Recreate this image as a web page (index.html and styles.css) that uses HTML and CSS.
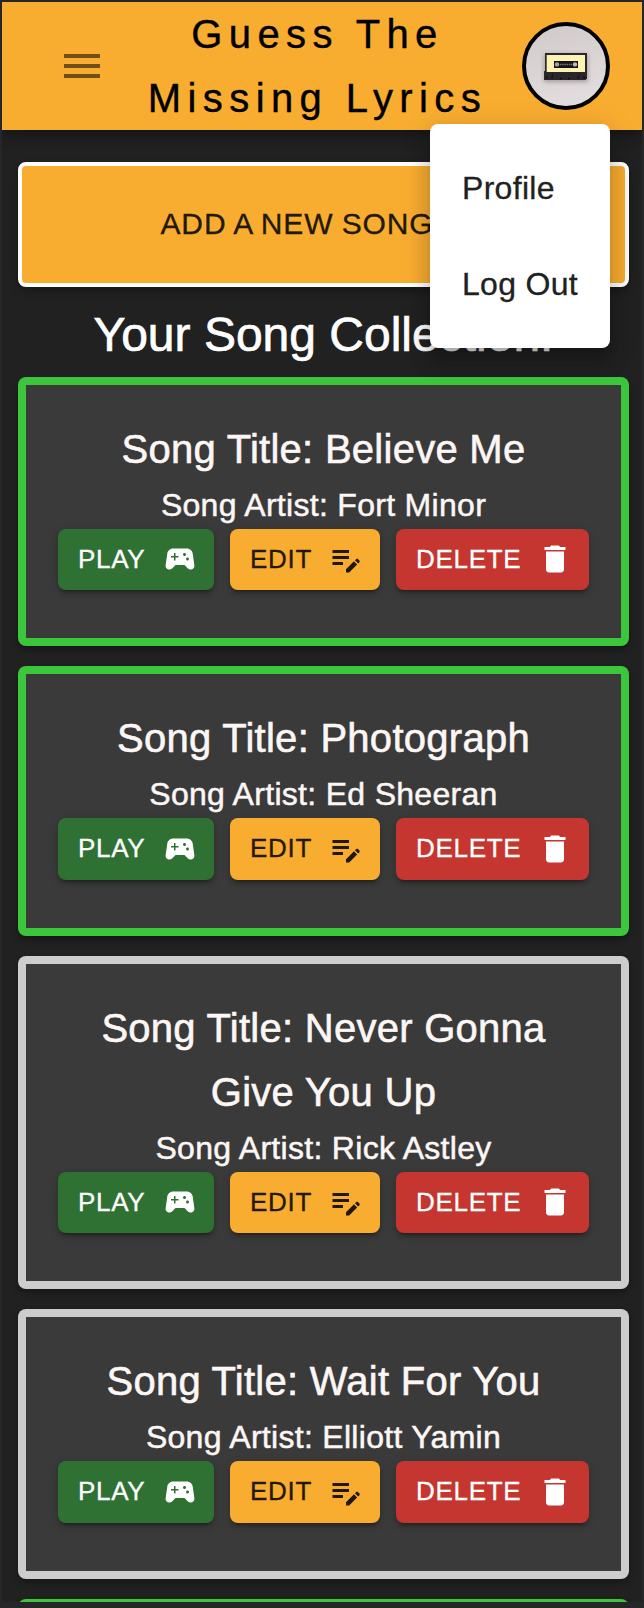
FILE: index.html
```html
<!DOCTYPE html>
<html lang="en">
<head>
<meta charset="utf-8">
<title>Guess The Missing Lyrics</title>
<link rel="stylesheet" href="styles.css">
</head>
<body>
<svg class="sprite" aria-hidden="true">
  <symbol id="game" viewBox="0 0 24 24"><path d="m21.58 16.09-1.09-7.66C20.21 6.46 18.52 5 16.53 5H7.47C5.48 5 3.79 6.46 3.51 8.43l-1.09 7.66C2.2 17.63 3.39 19 4.94 19c.68 0 1.32-.27 1.8-.75L9 16h6l2.25 2.25c.48.48 1.13.75 1.8.75 1.56 0 2.75-1.37 2.53-2.91M11 11H9v2H8v-2H6v-1h2V8h1v2h2zm4-1c-.55 0-1-.45-1-1s.45-1 1-1 1 .45 1 1-.45 1-1 1m2 3c-.55 0-1-.45-1-1s.45-1 1-1 1 .45 1 1-.45 1-1 1"/></symbol>
  <symbol id="note" viewBox="0 0 24 24"><path d="M3 10h11v2H3v-2zm0-2h11V6H3v2zm0 8h7v-2H3v2zm15.01-3.13.71-.71c.39-.39 1.02-.39 1.41 0l.71.71c.39.39.39 1.02 0 1.41l-.71.71-2.12-2.12zm-.71.71-5.3 5.3V21h2.12l5.3-5.3-2.12-2.12z"/></symbol>
  <symbol id="trash" viewBox="0 0 24 24"><path d="M6 19c0 1.1.9 2 2 2h8c1.1 0 2-.9 2-2V7H6v12zM19 4h-3.5l-1-1h-5l-1 1H5v2h14V4z"/></symbol>
</svg>
<div class="app">
  <header class="bar">
    <svg class="burger" viewBox="0 0 24 24"><path d="M3 18h18v-2H3v2zm0-5h18v-2H3v2zm0-7v2h18V6H3z"/></svg>
    <h1 class="brand">Guess The<br>Missing Lyrics</h1>
    <div class="account">
      <svg class="avatar" viewBox="0 0 88 88">
        <defs>
          <linearGradient id="wall" x1="0" y1="0" x2="0.3" y2="1"><stop offset="0" stop-color="#cfc9c8"/><stop offset="1" stop-color="#e2dcde"/></linearGradient>
          <filter id="soft" x="-30%" y="-30%" width="160%" height="160%"><feGaussianBlur stdDeviation="2.2"/></filter>
        </defs>
        <circle cx="44" cy="44" r="42" fill="url(#wall)" stroke="#000" stroke-width="4"/>
        <rect x="22" y="32" width="44" height="28" fill="#8d8688" opacity=".7" filter="url(#soft)"/>
        <path d="M23 31h42v26h-1v1H22v-9h1z" fill="#29272a"/>
        <rect x="24.7" y="33" width="38.3" height="17" fill="#fbf2b4"/>
        <rect x="32" y="39" width="24" height="7" fill="#171417"/>
        <circle cx="35" cy="42.4" r="2.2" fill="#a8a4a5"/><circle cx="53" cy="42.4" r="2.2" fill="#bdb8b9"/>
        <path d="M38 42.5h12" stroke="#787476" stroke-width="1.6" stroke-dasharray="1.5 .7"/>
        <path d="M24 55.5h2m3 0h2m7 1h2m6 0h2m7-1h2m4 0h2M30 53h1m26 0h1" stroke="#0e0d0f" stroke-width="1.6"/>
      </svg>
      <nav class="menu"><a class="item">Profile</a><a class="item">Log Out</a></nav>
    </div>
  </header>
  <main class="content">
    <button class="add">Add a new song</button>
    <h2 class="heading">Your Song Collection!</h2>
    <section class="songs">
      <article class="card done">
        <h3 class="title">Song Title: Believe Me</h3><p class="artist">Song Artist: Fort Minor</p>
        <div class="actions"><button class="btn play">Play<svg class="icon"><use href="#game"/></svg></button><button class="btn edit">Edit<svg class="icon"><use href="#note"/></svg></button><button class="btn delete">Delete<svg class="icon"><use href="#trash"/></svg></button></div>
      </article>
      <article class="card done">
        <h3 class="title">Song Title: Photograph</h3><p class="artist">Song Artist: Ed Sheeran</p>
        <div class="actions"><button class="btn play">Play<svg class="icon"><use href="#game"/></svg></button><button class="btn edit">Edit<svg class="icon"><use href="#note"/></svg></button><button class="btn delete">Delete<svg class="icon"><use href="#trash"/></svg></button></div>
      </article>
      <article class="card">
        <h3 class="title">Song Title: Never Gonna<br>Give You Up</h3><p class="artist">Song Artist: Rick Astley</p>
        <div class="actions"><button class="btn play">Play<svg class="icon"><use href="#game"/></svg></button><button class="btn edit">Edit<svg class="icon"><use href="#note"/></svg></button><button class="btn delete">Delete<svg class="icon"><use href="#trash"/></svg></button></div>
      </article>
      <article class="card">
        <h3 class="title">Song Title: Wait For You</h3><p class="artist">Song Artist: Elliott Yamin</p>
        <div class="actions"><button class="btn play">Play<svg class="icon"><use href="#game"/></svg></button><button class="btn edit">Edit<svg class="icon"><use href="#note"/></svg></button><button class="btn delete">Delete<svg class="icon"><use href="#trash"/></svg></button></div>
      </article>
      <article class="card done"></article>
    </section>
  </main>
</div>
</body>
</html>
```
FILE: styles.css
```css
* { box-sizing: border-box; }
html { height: 1608px; overflow: hidden; background: #262527; }
body { margin: 0; padding: 2px 2px 6px 2px; height: 1608px; overflow: hidden; font-family: "Liberation Sans", Arial, sans-serif; }
h1, h2, h3, p { margin: 0; font-weight: 400; }
.sprite { display: none; }
.app { width: 640px; height: 1600px; overflow: hidden; background: #212121; }

.bar { position: relative; z-index: 2; height: 128px; padding: 0 32px 0 56px; display: flex; align-items: center; justify-content: space-between; background: #f9ad30; box-shadow: 0 4px 8px -2px rgba(0,0,0,.2), 0 8px 10px rgba(0,0,0,.14), 0 2px 20px rgba(0,0,0,.12); }
.burger { width: 48px; height: 48px; fill: rgba(0,0,0,.54); }
.brand { margin-left: 7px; color: #000; font-size: 40px; line-height: 64px; letter-spacing: 6.4px; text-align: center; -webkit-text-stroke: .4px #000; }
.account { position: relative; width: 88px; height: 88px; }
.avatar { display: block; width: 88px; height: 88px; }
.menu { position: absolute; top: 102px; right: 0; width: 180px; padding: 16px 0; border-radius: 8px; background: #fff; box-shadow: 0 10px 10px -6px rgba(0,0,0,.2), 0 16px 20px 2px rgba(0,0,0,.14), 0 6px 28px 4px rgba(0,0,0,.12); }
.item { display: block; height: 96px; padding: 0 32px; line-height: 96px; font-size: 32px; letter-spacing: .3px; color: #212121; white-space: nowrap; -webkit-text-stroke: .3px; }

.content { padding: 32px 13px 0 16px; }
.add { display: block; width: 100%; height: 125px; padding: 0 53px 2px 0; border: 4px solid #fff; border-radius: 8px; background: #f9ad30; color: #211805; font: 30px "Liberation Sans", Arial, sans-serif; letter-spacing: .86px; word-spacing: -.8px; text-transform: uppercase; -webkit-text-stroke: .3px; box-shadow: 0 4px 8px rgba(0,0,0,.3); }
.heading { height: 89.75px; padding-top: 4px; font-size: 48px; line-height: 88px; color: #fff; text-align: center; -webkit-text-stroke: .7px; }
.songs { display: flex; flex-direction: column; gap: 20px; }
.card { flex: none; min-height: 269.5px; padding: 8px; border-radius: 8px; background: linear-gradient(#3a3a3a, #3a3a3a) content-box, #cdcdcd; box-shadow: 0 4px 6px rgba(0,0,0,.3); }
.done { background: linear-gradient(#3a3a3a, #3a3a3a) content-box, #3cc63c; }
.title { padding-top: 32px; font-size: 40px; line-height: 64px; letter-spacing: .27px; color: #fcf6f5; text-align: center; -webkit-text-stroke: .6px; }
.artist { font-size: 32px; line-height: 48px; letter-spacing: .3px; color: #fcf6f5; text-align: center; -webkit-text-stroke: .5px; }
.actions { display: flex; justify-content: center; gap: 16px; padding-bottom: 48px; }
.btn { display: flex; align-items: center; justify-content: space-between; height: 61.5px; padding: 0 16px 1px 20px; border: 0; border-radius: 8px; font: 26px "Liberation Sans", Arial, sans-serif; letter-spacing: .7px; text-transform: uppercase; color: #fff; -webkit-text-stroke: .3px; box-shadow: 0 6px 2px -4px rgba(0,0,0,.2), 0 4px 4px rgba(0,0,0,.14), 0 2px 10px rgba(0,0,0,.12); }
.icon { width: 36px; height: 36px; fill: currentColor; stroke: none; }
.play { width: 156px; background: #2f7033; }
.edit { width: 150px; background: #f9ad30; color: #211805; }
.delete { width: 193px; background: #c53630; }
```
